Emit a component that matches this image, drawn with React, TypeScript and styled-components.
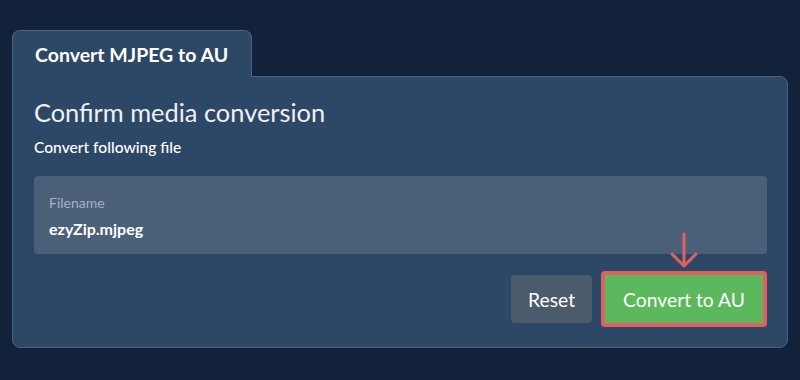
import styled, { createGlobalStyle } from "styled-components";

const GlobalStyle = createGlobalStyle`
  html, body {
    margin: 0;
    padding: 0;
    background: #11223a;
    font-family: Lato, "Open Sans", sans-serif;
  }
`;

const Page = styled.div`
  width: 800px;
  height: 380px;
  box-sizing: border-box;
  padding: 30px 12px 0 12px;
`;

const Tab = styled.div`
  display: inline-block;
  box-sizing: border-box;
  width: 240px;
  height: 47px;
  padding: 12px 0 0 22px;
  background: #2d4866;
  border: 1px solid #4a6382;
  border-bottom: none;
  border-radius: 8px 8px 0 0;
  color: #ffffff;
  font-size: 19.5px;
  font-weight: 700;
  position: relative;
  z-index: 1;
  margin-bottom: -1px;
`;

const Panel = styled.div`
  box-sizing: border-box;
  height: 272px;
  background: #2d4866;
  border: 1px solid #4a6382;
  border-radius: 0 8px 8px 8px;
  padding: 19px 20px 0 21px;
  color: #e9edf2;
`;

const Title = styled.h1`
  margin: 0;
  font-size: 25.4px;
  font-weight: 400;
  line-height: 32px;
  color: #eef1f4;
`;

const Subtitle = styled.div`
  margin-top: 10px;
  font-size: 15.6px;
  font-weight: 500;
  color: #ffffff;
`;

const Field = styled.div`
  margin-top: 20px;
  height: 78px;
  box-sizing: border-box;
  background: #4a6078;
  border-radius: 4px;
  padding: 18px 15px 0 15px;
`;

const FieldLabel = styled.div`
  font-size: 14px;
  color: #a5b1be;
  line-height: 17px;
`;

const FieldValue = styled.div`
  margin-top: 8px;
  font-size: 16px;
  font-weight: 700;
  color: #ffffff;
`;

const Actions = styled.div`
  display: flex;
  justify-content: flex-end;
  align-items: center;
  gap: 9px;
  margin-top: 17px;
`;

const Button = styled.button<{ $variant: "muted" | "primary" }>`
  font-family: Lato, "Open Sans", sans-serif;
  font-size: 19.3px;
  color: #ffffff;
  border-radius: 4px;
  cursor: pointer;
  box-sizing: border-box;
  height: ${(p) => (p.$variant === "primary" ? "56px" : "48px")};
  padding: ${(p) => (p.$variant === "primary" ? "0 18px" : "0 17px")};
  background: ${(p) => (p.$variant === "primary" ? "#5cb85c" : "#4b5b6c")};
  border: ${(p) => (p.$variant === "primary" ? "4px solid #e06060" : "none")};
`;

const Highlight = styled.div`
  position: relative;
`;

const Arrow = styled.svg`
  position: absolute;
  left: 50%;
  top: -39px;
  transform: translateX(-50%);
`;

export default function App() {
  return (
    <>
      <GlobalStyle />
      <Page>
        <Tab>Convert MJPEG to AU</Tab>
        <Panel>
          <Title>Confirm media conversion</Title>
          <Subtitle>Convert following file</Subtitle>
          <Field>
            <FieldLabel>Filename</FieldLabel>
            <FieldValue>ezyZip.mjpeg</FieldValue>
          </Field>
          <Actions>
            <Button $variant="muted">Reset</Button>
            <Highlight>
              <Arrow width="32" height="38" viewBox="0 0 32 38">
                <path
                  d="M16 2 V34 M4 22 L16 34 L28 22"
                  fill="none"
                  stroke="#e06060"
                  strokeWidth="3"
                  strokeLinecap="round"
                  strokeLinejoin="round"
                />
              </Arrow>
              <Button $variant="primary">Convert to AU</Button>
            </Highlight>
          </Actions>
        </Panel>
      </Page>
    </>
  );
}
